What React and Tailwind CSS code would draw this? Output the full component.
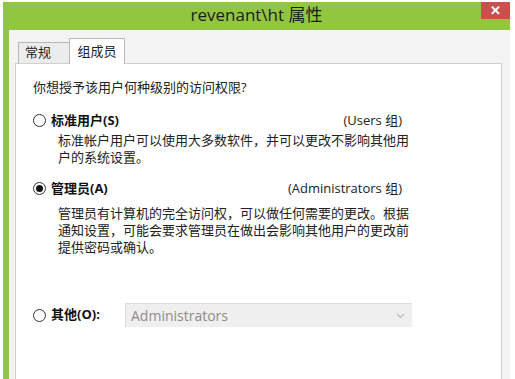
const FONT = '"Open Sans", "Noto Sans CJK SC", sans-serif'

function Radio({ checked }) {
  return (
    <span className="w-[13px] h-[13px] rounded-full border border-[#333] bg-white flex items-center justify-center shrink-0">
      {checked && <span className="w-[7px] h-[7px] rounded-full bg-[#111]" />}
    </span>
  )
}

function Option({ label, group, checked, children }) {
  return (
    <div>
      <div className="flex items-center justify-between w-[369px] h-[17px]">
        <div className="flex items-center gap-[5px]">
          <Radio checked={checked} />
          <span className="font-bold text-[13px] text-[#111]">{label}</span>
        </div>
        <span className="text-[13px] text-[#222]">{group}</span>
      </div>
      <div className="pl-[25px] text-[13px] leading-[17px] text-[#222]">{children}</div>
    </div>
  )
}

export default function App() {
  return (
    <div className="w-[515px] h-[379px] bg-white pt-[2px] pl-[3px] pr-[5px] overflow-hidden" style={{ fontFamily: FONT }}>
      {/* title bar */}
      <div className="relative h-[28px] bg-[#91c640] flex items-center justify-center">
        <span className="text-[17px] text-[#1c1c1c] -mt-[2px]">revenant\ht 属性</span>
        <div className="absolute right-0 top-0 w-[29px] h-[17px] bg-[#c9504c] flex items-center justify-center text-white text-[13px] font-bold leading-none">
          ✕
        </div>
      </div>

      <div className="flex h-[400px]">
        <div className="w-[6px] bg-[#91c640]" />
        <div className="flex-1 bg-[#f3f3f3] pl-[6px] pr-[8px] pt-[8px] flex flex-col">
          {/* tabs */}
          <div className="flex items-end pl-[3px] h-[25px] relative z-10">
            <div className="h-[21px] w-[52px] border border-[#b8b8b8] border-b-0 bg-[#ececec] text-[13px] text-[#222] flex items-center pl-[6px]">
              常规
            </div>
            <div className="h-[26px] w-[56px] border border-[#b8b8b8] border-b-0 bg-white text-[13px] text-[#222] flex items-center justify-center -ml-px -mb-px">
              组成员
            </div>
          </div>

          {/* panel */}
          <div className="flex-1 bg-white border border-[#cfcfcf] pl-[17px] pt-[15px]">
            <div className="text-[13px] text-[#222] leading-[17px]">你想授予该用户何种级别的访问权限?</div>

            <div className="mt-[16px]">
              <Option label="标准用户(S)" group="(Users 组)">
                <div className="mt-[3px]">标准帐户用户可以使用大多数软件，并可以更改不影响其他用</div>
                <div>户的系统设置。</div>
              </Option>
            </div>

            <div className="mt-[14px]">
              <Option label="管理员(A)" group="(Administrators 组)" checked>
                <div className="mt-[8px]">管理员有计算机的完全访问权，可以做任何需要的更改。根据</div>
                <div>通知设置，可能会要求管理员在做出会影响其他用户的更改前</div>
                <div>提供密码或确认。</div>
              </Option>
            </div>

            <div className="mt-[47px] flex items-center">
              <div className="flex items-center gap-[5px] w-[92px]">
                <Radio />
                <span className="font-bold text-[13px] text-[#111]">其他(O):</span>
              </div>
              <div className="w-[287px] h-[24px] bg-[#efefef] border-t border-l border-[#dcdcdc] flex items-center justify-between px-[5px]">
                <span className="text-[14px] text-[#8c8c8c]">Administrators</span>
                <svg width="9" height="6" viewBox="0 0 9 6" className="mr-[2px]">
                  <path d="M1 1 L4.5 4.5 L8 1" stroke="#b8b8b8" strokeWidth="1.2" fill="none" />
                </svg>
              </div>
            </div>
          </div>
        </div>
      </div>
    </div>
  )
}
